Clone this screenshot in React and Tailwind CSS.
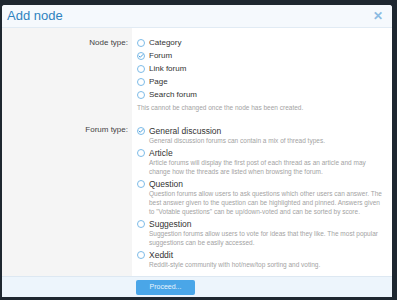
import { Check } from 'lucide-react';

const nodeTypes = [
  { label: 'Category' },
  { label: 'Forum', checked: true },
  { label: 'Link forum' },
  { label: 'Page' },
  { label: 'Search forum' },
];

const forumTypes = [
  {
    label: 'General discussion',
    checked: true,
    desc: 'General discussion forums can contain a mix of thread types.',
  },
  {
    label: 'Article',
    desc: 'Article forums will display the first post of each thread as an article and may change how the threads are listed when browsing the forum.',
  },
  {
    label: 'Question',
    desc: 'Question forums allow users to ask questions which other users can answer. The best answer given to the question can be highlighted and pinned. Answers given to "Votable questions" can be up/down-voted and can be sorted by score.',
  },
  {
    label: 'Suggestion',
    desc: 'Suggestion forums allow users to vote for ideas that they like. The most popular suggestions can be easily accessed.',
  },
  {
    label: 'Xeddit',
    desc: 'Reddit-style community with hot/new/top sorting and voting.',
  },
];

const Radio = ({ checked }) => (
  <span className="w-[8px] h-[8px] rounded-full border border-[#7dbbe8] bg-white flex items-center justify-center shrink-0">
    {checked && <Check className="w-[6px] h-[6px] text-[#4a9fdc]" strokeWidth={4} />}
  </span>
);

const App = () => {
  return (
    <div
      className="w-[397px] h-[300px] bg-[#1e2730] pt-[5px] pl-[2px] pr-[5px] pb-[3px] overflow-hidden"
      style={{ fontFamily: '"Liberation Sans", Arial, sans-serif' }}
    >
      <div className="h-full bg-white rounded-t-[3px] flex flex-col overflow-hidden">
        <div className="h-[23px] shrink-0 flex items-center justify-between px-[5px] bg-[#f5f9fd] border-b border-[#e1ebf4]">
          <span className="text-[13px] text-[#2f83bf]">Add node</span>
          <span className="text-[12px] font-bold leading-none text-[#8bbbe2] mr-[4px]">✕</span>
        </div>

        <div className="flex-1 flex">
          <div className="w-[130px] shrink-0 bg-[#f5f5f5] text-[8px] text-[#444] text-right pr-[4px]">
            <div className="pt-[8px] leading-[13px]">Node type:</div>
            <div className="mt-[76px] leading-[10px]">Forum type:</div>
          </div>
          <div className="flex-1 pl-[5px] pr-[6px] pt-[8px]">
            <div className="flex flex-col">
              {nodeTypes.map((n) => (
                <div key={n.label} className="flex items-center gap-[4px] h-[13px] text-[8px] text-[#333]">
                  <Radio checked={n.checked} />
                  <span>{n.label}</span>
                </div>
              ))}
              <div className="text-[6.5px] leading-[10px] text-[#a3a3a3] mt-[2px]">
                This cannot be changed once the node has been created.
              </div>
            </div>

            <div className="flex flex-col gap-[3px] mt-[13px]">
              {forumTypes.map((f) => (
                <div key={f.label} className="flex gap-[4px]">
                  <div className="h-[10px] flex items-center">
                    <Radio checked={f.checked} />
                  </div>
                  <div className="flex-1">
                    <div className="text-[8.5px] leading-[10px] text-[#333]">{f.label}</div>
                    <div className="text-[6.5px] leading-[9px] text-[#a3a3a3]">{f.desc}</div>
                  </div>
                </div>
              ))}
            </div>
          </div>
        </div>

        <div className="h-[21px] shrink-0 bg-[#edf5fc] border-t border-[#dde8f2] flex items-center pl-[134px]">
          <button className="w-[59px] h-[15px] bg-[#4aa6e8] rounded-[2px] text-[7px] text-[#e8f4fd]">
            Proceed...
          </button>
        </div>
      </div>
    </div>
  );
};

export default App;
